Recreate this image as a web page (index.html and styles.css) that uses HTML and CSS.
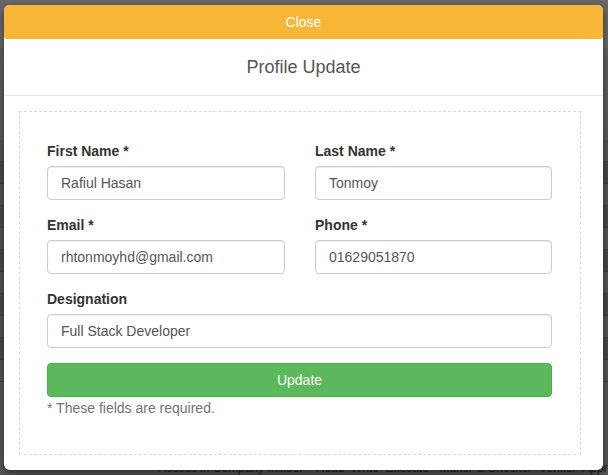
FILE: index.html
```html
<!DOCTYPE html>
<html>
<head>
<meta charset="utf-8">
<link rel="stylesheet" href="styles.css">
</head>
<body>
<div class="page">
  <div class="page-top"></div>
  <div class="page-head"></div>
  <div class="rows">
    <div class="row light"></div>
    <div class="row"></div>
    <div class="row light"></div>
    <div class="row"></div>
    <div class="row light"></div>
    <div class="row"></div>
    <div class="row light"></div>
    <div class="row"></div>
    <div class="row light"></div>
    <div class="row"></div>
    <div class="row light"></div>
  </div>
  <div class="row-last">Access in Company Insider '  Read  Write  Execute - Maker &amp; Checker  Verifier  Approver</div>
</div>

<div class="modal">
  <button class="close-bar">Close</button>
  <div class="modal-header">Profile Update</div>
  <div class="modal-body">
    <form class="form-box">
      <div class="grid">
        <div class="field">
          <label>First Name *</label>
          <input type="text" value="Rafiul Hasan">
        </div>
        <div class="field">
          <label>Last Name *</label>
          <input type="text" value="Tonmoy">
        </div>
        <div class="field">
          <label>Email *</label>
          <input type="text" value="rhtonmoyhd@gmail.com">
        </div>
        <div class="field">
          <label>Phone *</label>
          <input type="text" value="01629051870">
        </div>
        <div class="field wide">
          <label>Designation</label>
          <input type="text" value="Full Stack Developer">
        </div>
      </div>
      <button type="button" class="update">Update</button>
      <p class="note">* These fields are required.</p>
    </form>
  </div>
</div>
</body>
</html>
```

FILE: styles.css
```css
* { box-sizing: border-box; }
html, body {
  margin: 0;
  padding: 0;
  width: 608px;
  height: 475px;
  overflow: hidden;
  font-family: "Liberation Sans", Arial, sans-serif;
}
body { position: relative; background: #555; }

.page { display: flex; flex-direction: column; height: 475px; overflow: hidden; }
.page-top { height: 48px; background: #686868; flex: none; }
.page-head { height: 92px; background: linear-gradient(#616161, #5b5b5b); flex: none; }
.rows { display: flex; flex-direction: column; flex: none; }
.row {
  height: 22px;
  background: #494949;
  border-bottom: 1px solid #424242;
}
.row.light { background: #565656; }
.row-last {
  flex: 1;
  background: #575757;
  color: #1e1e1e;
  font-size: 12px;
  line-height: 14px;
  padding: 0 0 0 158px;
  display: flex;
  align-items: flex-end;
  white-space: pre;
  overflow: hidden;
}

.modal {
  position: absolute;
  left: 4px;
  top: 5px;
  width: 599px;
  height: 465px;
  background: #fff;
  border-radius: 6px;
  box-shadow: 0 3px 9px rgba(0,0,0,0.5);
  display: flex;
  flex-direction: column;
}
.close-bar {
  display: block;
  flex: none;
  width: 100%;
  height: 34px;
  border: 0;
  background: #f8b739;
  color: #fff;
  font-family: "Liberation Sans", Arial, sans-serif;
  font-size: 14px;
  border-radius: 5px 5px 3px 3px;
  padding: 0;
  cursor: pointer;
}
.modal-header {
  flex: none;
  height: 57px;
  border-bottom: 1px solid #e5e5e5;
  display: flex;
  align-items: center;
  justify-content: center;
  font-size: 18px;
  color: #555;
}
.modal-body { padding: 15px 22px 15px 15px; }
.form-box {
  margin: 0;
  border: 1px dashed #d9d9d9;
  padding: 29px 28px 36px 27px;
}
.grid {
  display: grid;
  grid-template-columns: 238px 237px;
  column-gap: 30px;
  row-gap: 15px;
}
.field { display: flex; flex-direction: column; }
.field.wide { grid-column: 1 / 3; }
label {
  font-size: 14px;
  font-weight: bold;
  color: #333;
  line-height: 20px;
  margin-bottom: 5px;
}
input {
  height: 34px;
  border: 1px solid #ccc;
  border-radius: 4px;
  padding: 0 13px;
  font-family: "Liberation Sans", Arial, sans-serif;
  font-size: 14px;
  color: #555;
  box-shadow: inset 0 1px 1px rgba(0,0,0,0.075);
  outline: none;
}
.update {
  display: block;
  width: 100%;
  height: 34px;
  margin-top: 15px;
  border: 1px solid #4cae4c;
  border-radius: 4px;
  background: #5cb85c;
  color: #fff;
  font-family: "Liberation Sans", Arial, sans-serif;
  font-size: 14px;
  cursor: pointer;
}
.note {
  margin: 1px 0 0;
  font-size: 14px;
  line-height: 20px;
  color: #737373;
}
```
